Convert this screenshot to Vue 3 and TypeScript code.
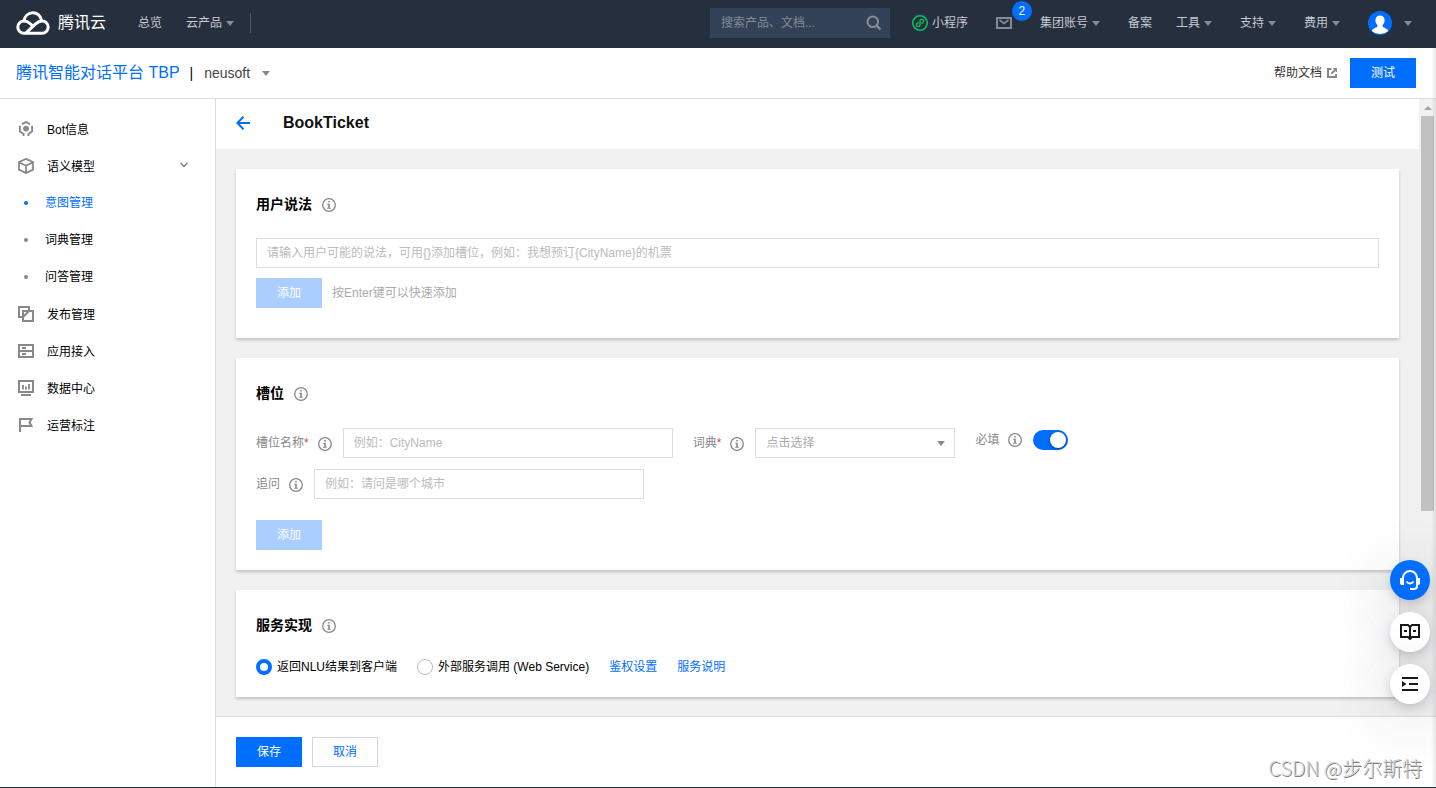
<script setup lang="ts">
import { h, ref, type FunctionalComponent } from 'vue'

interface MenuItem {
  label: string
  icon: string
}

const InfoIcon: FunctionalComponent = () =>
  h('svg', { viewBox: '0 0 14 14', width: 14, height: 14, 'aria-hidden': 'true' }, [
    h('circle', { cx: 7, cy: 7, r: 6.3, fill: 'none', stroke: '#888', 'stroke-width': 1.3 }),
    h('path', { d: 'M6.2 3h1.6v1.5H6.2zM5.2 5.8h2.6v4h1v1H5.2v-1h1V6.8h-1z', fill: '#888' }),
  ])

const topMenu: MenuItem[] = [
  { label: 'Bot信息', icon: 'bot' },
  { label: '语义模型', icon: 'cube' },
]
const subMenu = ['意图管理', '词典管理', '问答管理']
const bottomMenu: MenuItem[] = [
  { label: '发布管理', icon: 'publish' },
  { label: '应用接入', icon: 'server' },
  { label: '数据中心', icon: 'chart' },
  { label: '运营标注', icon: 'flag' },
]
const navItems = [
  { label: '集团账号', caret: true },
  { label: '备案', caret: false },
  { label: '工具', caret: true },
  { label: '支持', caret: true },
  { label: '费用', caret: true },
]

const activeMenu = ref('意图管理')
const keyword = ref('')
const utterance = ref('')
const slotName = ref('')
const dict = ref('')
const question = ref('')
const required = ref(true)
const service = ref('nlu')
</script>

<template>
  <div class="page">
    <header class="topbar">
      <a class="brand" href="#">
        <svg class="brand-logo" viewBox="0 0 34 24" width="34" height="24" aria-hidden="true">
          <g fill="none" stroke="#fff" stroke-width="3" stroke-linejoin="round">
            <path d="M9.5 22.300H26a6.200 6.200 0 0 0 0-12.400c-2.800 0-4.500 1.200-6.400 3L9.800 22.200" />
            <path d="M10 22.300H8A6.200 6.200 0 0 1 8 9.900c2.500 0 4.200 1 6 2.600l2.600 2.400" />
            <path d="M8 9.800C8.700 5 12.300 1.800 16.700 1.800c4.300 0 7.600 2.900 8.800 7.400" />
          </g>
        </svg>
        <span class="brand-name">腾讯云</span>
      </a>
      <a class="nav-link nav-first" href="#">总览</a>
      <a class="nav-link" href="#">云产品<i class="caret" /></a>
      <span class="nav-divider" />
      <div class="search">
        <input v-model="keyword" type="text" placeholder="搜索产品、文档..." aria-label="搜索产品、文档" />
        <svg viewBox="0 0 16 16" width="16" height="16" aria-hidden="true">
          <circle cx="6.800" cy="6.800" r="5.300" fill="none" stroke="#838c99" stroke-width="2" />
          <path d="m10.600 10.600 3.900 3.900" stroke="#838c99" stroke-width="2.400" />
        </svg>
      </div>
      <a class="nav-link mini" href="#">
        <svg viewBox="0 0 16 16" width="16" height="16" aria-hidden="true">
          <g fill="none" stroke="#0abf5b">
            <circle cx="8" cy="8" r="7.200" stroke-width="1.600" />
            <path d="M9.800 8.200c2.600-.6 2.300-3.800 0-3.800C8.700 4.400 8 5.200 8 6.100v3.800c0 .9-.7 1.700-1.800 1.700-2.300 0-2.600-3.200 0-3.800" stroke-width="1.400" stroke-linecap="round" />
          </g>
        </svg>
        小程序
      </a>
      <button class="mail" type="button" aria-label="消息">
        <svg viewBox="0 0 16 12" width="16" height="12" aria-hidden="true">
          <path d="M1 1h14v10H1z" fill="none" stroke="#838c96" stroke-width="2" />
          <path d="m3.500 3 4.500 3.500L12.500 3" fill="none" stroke="#838c96" stroke-width="1.600" />
        </svg>
        <span class="badge">2</span>
      </button>
      <a v-for="item in navItems" :key="item.label" class="nav-link" href="#">{{ item.label }}<i v-if="item.caret" class="caret" /></a>
      <button class="account" type="button" aria-label="账号">
        <svg viewBox="0 0 24 24" width="24" height="24" aria-hidden="true">
          <circle cx="12" cy="12" r="12" fill="#006eff" />
          <path d="M12 4.500c-2.800 0-4.600 2-4.600 4.800 0 1.900.8 3.600 2 4.600v1.600c0 .8-5 1.900-5.700 4.500A12 12 0 0 0 12 23a12 12 0 0 0 8.300-3c-.7-2.600-5.700-3.700-5.700-4.500v-1.600c1.200-1 2-2.700 2-4.600 0-2.800-1.800-4.800-4.600-4.800z" fill="#fff" />
        </svg>
        <i class="caret" />
      </button>
    </header>

    <div class="product-bar">
      <a class="product" href="#">腾讯智能对话平台 TBP</a>
      <span class="bar">|</span>
      <button class="bot-switch" type="button">neusoft<i class="caret dark" /></button>
      <a class="help" href="#">
        帮助文档
        <svg viewBox="0 0 10 10" width="10" height="10" aria-hidden="true">
          <path d="M4.500 1H1v8h8V6" fill="none" stroke="#888" stroke-width="2" />
          <path d="M5.600 0H10v4.400L8.500 2.900 5 6.400 3.700 5.100 7.200 1.600z" fill="#888" />
        </svg>
      </a>
      <button class="btn primary" type="button">测试</button>
    </div>

    <div class="body">
      <nav class="sidebar">
        <a v-for="item in topMenu" :key="item.label" class="menu-item" href="#">
          <svg viewBox="0 0 16 16" width="16" height="16" fill="none" stroke="#888" stroke-width="1.800" aria-hidden="true">
            <template v-if="item.icon === 'bot'">
              <path d="M4 3.200 8 1l4 2.200M1.900 4.800v5.700L5.600 13v2M14.100 4.800v5.700L10.400 13v2" stroke-width="1.900" />
              <circle cx="8" cy="7.600" r="2.900" fill="#888" stroke="none" />
            </template>
            <path v-else d="M8 .9 15 4v7.600l-7 3.500-7-3.500V4zM1 4.200l7 3.600 7-3.600M8 7.800V15" />
          </svg>
          <span>{{ item.label }}</span>
          <svg v-if="item.icon === 'cube'" class="fold" viewBox="0 0 8 6" width="8" height="6" aria-hidden="true">
            <path d="m.6.9 3.400 3.600L7.400.9" fill="none" stroke="#777" stroke-width="1.300" />
          </svg>
        </a>
        <a
          v-for="label in subMenu"
          :key="label"
          class="menu-item sub"
          :class="{ active: label === activeMenu }"
          href="#"
          @click.prevent="activeMenu = label"
        ><i class="dot" /><span>{{ label }}</span></a>
        <a v-for="item in bottomMenu" :key="item.label" class="menu-item" href="#">
          <svg viewBox="0 0 16 16" width="16" height="16" fill="none" stroke="#888" stroke-width="2" aria-hidden="true">
            <path v-if="item.icon === 'publish'" d="M5 11H1V1h10v4M5 5h10v10H5zM5.500 10.500l5-5" />
            <template v-else-if="item.icon === 'server'">
              <path d="M1 2h14v12H1zM1 8h14" />
              <path d="M4 5h4M4 11h4" />
            </template>
            <template v-else-if="item.icon === 'chart'">
              <path d="M1 1h14v11H1zM3 15h10" />
              <path d="M5 5v4.500M8 6.500v3M11 4v5.500" stroke-width="1.800" />
            </template>
            <path v-else d="M2 15V2h11.500L11.500 5.500 13.500 9H2" />
          </svg>
          <span>{{ item.label }}</span>
        </a>
      </nav>

      <div class="workspace">
        <div class="viewport">
          <main class="main">
            <div class="page-head">
              <button class="back" type="button" aria-label="返回">
                <svg viewBox="0 0 14 14" width="14" height="14" aria-hidden="true">
                  <path d="M7.500.8 1.300 7l6.200 6.200M1.500 7H14" fill="none" stroke="#006eff" stroke-width="2" />
                </svg>
              </button>
              <h1>BookTicket</h1>
            </div>

            <div class="cards">
              <section class="card utterances">
                <h2>用户说法<InfoIcon class="info" /></h2>
                <input
                  v-model="utterance"
                  class="field"
                  type="text"
                  aria-label="用户说法"
                  placeholder="请输入用户可能的说法，可用{}添加槽位，例如：我想预订{CityName}的机票"
                />
                <div class="add-row">
                  <button class="btn primary" type="button" disabled>添加</button>
                  <span class="hint">按Enter键可以快速添加</span>
                </div>
              </section>

              <section class="card slots">
                <h2>槽位<InfoIcon class="info" /></h2>
                <div class="form-row">
                  <div class="form-item">
                    <label for="slot-name">槽位名称<em>*</em></label>
                    <InfoIcon class="info" />
                    <input id="slot-name" v-model="slotName" class="field" type="text" placeholder="例如：CityName" />
                  </div>
                  <div class="form-item">
                    <label for="slot-dict">词典<em>*</em></label>
                    <InfoIcon class="info" />
                    <div class="select-wrap">
                      <select id="slot-dict" v-model="dict" class="field">
                        <option value="">点击选择</option>
                      </select>
                      <i class="caret dark" />
                    </div>
                  </div>
                  <div class="form-item toggle">
                    <label for="slot-required">必填</label>
                    <InfoIcon class="info" />
                    <input id="slot-required" v-model="required" class="switch" type="checkbox" />
                  </div>
                </div>
                <div class="form-row">
                  <div class="form-item">
                    <label for="slot-ask">追问</label>
                    <InfoIcon class="info" />
                    <input id="slot-ask" v-model="question" class="field" type="text" placeholder="例如：请问是哪个城市" />
                  </div>
                </div>
                <button class="btn primary" type="button" disabled>添加</button>
              </section>

              <section class="card service">
                <h2>服务实现<InfoIcon class="info" /></h2>
                <div class="radio-row">
                  <label><input v-model="service" type="radio" name="service" value="nlu" />返回NLU结果到客户端</label>
                  <label><input v-model="service" type="radio" name="service" value="web" />外部服务调用 (Web Service)</label>
                  <a href="#">鉴权设置</a>
                  <a href="#">服务说明</a>
                </div>
              </section>
            </div>
          </main>
          <div class="scrollbar">
            <i class="scroll-up" />
            <div class="thumb" />
          </div>
        </div>
        <footer class="actions">
          <button class="btn primary" type="button">保存</button>
          <button class="btn plain" type="button">取消</button>
        </footer>
      </div>
      <div class="edge" />
    </div>

    <div class="float-tools">
      <button class="fab blue" type="button" aria-label="在线客服">
        <svg viewBox="0 0 20 20" width="20" height="20" aria-hidden="true">
          <g fill="none" stroke="#fff" stroke-width="2">
            <path d="M3 9V8a7 7 0 0 1 14 0v1M17 14v2a3 3 0 0 1-3 3h-4" />
            <path d="M6.500 11.500c1.800 2.600 5.200 2.600 7 0" />
          </g>
          <path d="M0 8h4v7H1.500L0 14zM20 8h-4v7h2.500l1.500-1z" fill="#fff" />
        </svg>
      </button>
      <button class="fab" type="button" aria-label="文档">
        <svg viewBox="0 0 20 16" width="20" height="16" fill="none" stroke="#16181c" stroke-width="2" aria-hidden="true">
          <path d="M10 3 8 1H1v12h7l2 2 2-2h7V1h-7zM10 3v12M4 7h3M13 7h3" />
        </svg>
      </button>
      <button class="fab" type="button" aria-label="展开">
        <svg viewBox="0 0 16 14" width="16" height="14" aria-hidden="true">
          <path d="M0 0h16v2H0zM7 6h9v2H7zM0 12h16v2H0zM0 4l4.500 3L0 10z" fill="#16181c" />
        </svg>
      </button>
    </div>
    <div class="watermark">CSDN @步尔斯特</div>
  </div>
</template>

<style>
body {
  margin: 0;
}
</style>

<style scoped>
.page {
  position: relative;
  display: flex;
  flex-direction: column;
  box-sizing: border-box;
  height: 100vh;
  overflow: hidden;
  border-bottom: 1px solid #262f3e;
  background: #fff;
  color: #000;
  font: 12px/20px "Liberation Sans", "Noto Sans CJK SC", sans-serif;
}
a {
  color: inherit;
  text-decoration: none;
}
button,
input,
select {
  box-sizing: border-box;
  margin: 0;
  padding: 0;
  border: 0;
  border-radius: 0;
  background: none;
  color: inherit;
  font: inherit;
}
button {
  cursor: pointer;
}
svg {
  flex: none;
  display: block;
}
.caret {
  flex: none;
  width: 0;
  height: 0;
  margin-left: 4px;
  border: 4px solid transparent;
  border-top: 5px solid #878d96;
  border-bottom: 0;
}
.caret.dark {
  border-top-color: #888;
}

.topbar {
  display: flex;
  align-items: center;
  flex: none;
  box-sizing: border-box;
  height: 48px;
  padding: 0 24px 2px 16px;
  background: #262f3e;
  color: #c7cbd1;
}
.brand {
  display: flex;
  align-items: center;
  gap: 8px;
  color: #fff;
}
.brand-name {
  font-size: 16px;
}
.nav-first {
  margin-left: 32px;
}
.nav-link {
  display: flex;
  align-items: center;
  margin-right: 24px;
  white-space: nowrap;
}
.nav-link:has(.caret) {
  margin-right: 28px;
}
.nav-divider {
  width: 1px;
  height: 20px;
  margin-left: -12px;
  background: #4c5565;
}
.search {
  display: flex;
  align-items: center;
  box-sizing: border-box;
  width: 180px;
  height: 30px;
  margin: 0 22px 0 auto;
  padding: 0 8px 0 11px;
  background: #344258;
}
.search input {
  flex: 1;
  min-width: 0;
  outline: 0;
}
.search input::placeholder {
  color: #838c99;
  opacity: 1;
}
.mini {
  gap: 4px;
  margin-right: 28px;
}
.mail {
  position: relative;
  margin-right: 28px;
}
.badge {
  position: absolute;
  left: 16px;
  top: -16px;
  width: 20px;
  height: 20px;
  border-radius: 50%;
  background: #006eff;
  color: #fff;
  line-height: 20px;
  text-align: center;
}
.account {
  display: flex;
  align-items: center;
  gap: 8px;
}

.product-bar {
  display: flex;
  align-items: center;
  flex: none;
  box-sizing: border-box;
  height: 51px;
  padding: 0 20px 0 16px;
  border-bottom: 1px solid #ddd;
  color: #333;
}
.product {
  color: #006eff;
  font-size: 16px;
}
.bar {
  margin: 0 11px 0 10px;
  color: #000;
  font-size: 14px;
}
.bot-switch {
  display: flex;
  align-items: center;
  gap: 8px;
  color: #444;
  font-size: 14px;
}
.help {
  display: flex;
  align-items: center;
  gap: 5px;
  margin: 0 13px 0 auto;
}

.btn {
  min-width: 66px;
  height: 30px;
  padding: 0 20px;
}
.primary {
  background: #006eff;
  color: #fff;
}
.primary:disabled {
  background: #aaceff;
}
.plain {
  border: 1px solid #cfd5de;
  color: #006eff;
}

.body {
  position: relative;
  display: flex;
  flex: 1;
  min-height: 0;
}
.sidebar {
  flex: none;
  box-sizing: border-box;
  width: 216px;
  padding-top: 12px;
  border-right: 1px solid #ddd;
}
.menu-item {
  display: flex;
  align-items: center;
  box-sizing: border-box;
  height: 37px;
  padding: 0 27px 0 18px;
  gap: 13px;
}
.menu-item > svg:first-child {
  margin-bottom: 1px;
}
.menu-item .fold {
  margin: 0 0 4px auto;
}
.sub {
  gap: 17px;
  padding: 0 27px 2px 24px;
}
.dot {
  width: 4px;
  height: 4px;
  border-radius: 50%;
  background: #888;
}
.active {
  color: #006eff;
}
.active .dot {
  background: #006eff;
}

.workspace {
  display: flex;
  flex-direction: column;
  flex: 1;
  min-width: 0;
}
.viewport {
  display: flex;
  flex: 1;
  min-height: 0;
  overflow: hidden;
}
.main {
  flex: 1;
  min-width: 0;
  background: #f1f1f1;
}
.page-head {
  display: flex;
  align-items: center;
  gap: 33px;
  box-sizing: border-box;
  height: 50px;
  padding: 0 20px 2px;
  background: #fff;
}
h1 {
  margin: 0;
  color: #111;
  font-size: 16px;
}
.cards {
  display: flex;
  flex-direction: column;
  gap: 20px;
  padding: 20px;
}
.card {
  padding: 20px;
  background: #fff;
  box-shadow: 0 2px 3px rgba(0, 0, 0, 0.2);
}
h2 {
  display: flex;
  align-items: center;
  gap: 10px;
  height: 30px;
  margin: 0 0 20px;
  font-size: 14px;
}
h2 .info {
  margin-top: 2px;
}
.field {
  height: 30px;
  padding: 0 10px;
  border: 1px solid #ddd;
  background: #fff;
  outline: 0;
}
.field::placeholder {
  color: #bbb;
  opacity: 1;
}
.utterances {
  padding-bottom: 30px;
}
.utterances h2 {
  margin-bottom: 19px;
}
.utterances .field {
  display: block;
  width: 100%;
}
.add-row {
  display: flex;
  align-items: center;
  gap: 10px;
  margin-top: 10px;
}
.hint {
  color: #aaa;
}
.form-row {
  display: flex;
  gap: 20px;
  margin-bottom: 11px;
}
.form-item {
  display: flex;
  align-items: center;
  color: #888;
}
.form-item .info {
  margin: 2px 11px 0 9px;
}
.form-item .field {
  width: 330px;
}
em {
  color: #e54545;
  font-style: normal;
}
.select-wrap {
  display: flex;
  align-items: center;
}
.select-wrap .field {
  width: 200px;
  appearance: none;
  color: #aaa;
}
.select-wrap .caret {
  margin: 0 10px 0 -18px;
  pointer-events: none;
}
.toggle {
  height: 24px;
}
.toggle .info {
  margin-top: 0;
}
.switch {
  position: relative;
  width: 35px;
  height: 20px;
  border-radius: 10px;
  background: #bbb;
  appearance: none;
}
.switch::before {
  content: "";
  position: absolute;
  left: 2px;
  top: 2px;
  width: 16px;
  height: 16px;
  border-radius: 50%;
  background: #fff;
  box-shadow: 0 1px 3px rgba(0, 0, 0, 0.5);
}
.switch:checked {
  background: #006eff;
}
.switch:checked::before {
  left: 17px;
}
.slots > .btn {
  display: block;
  margin-top: 21px;
}
.service h2 {
  margin-bottom: 17px;
}
.radio-row {
  display: flex;
  align-items: center;
  gap: 20px;
}
.radio-row label {
  display: flex;
  align-items: center;
  gap: 5px;
}
.radio-row input {
  width: 16px;
  height: 16px;
  border: 1px solid #bbb;
  border-radius: 50%;
  appearance: none;
}
.radio-row input:checked {
  border: 4px solid #006eff;
}
.radio-row a {
  color: #006eff;
}

.scrollbar {
  display: flex;
  flex-direction: column;
  align-items: center;
  flex: none;
  width: 17px;
  background: #f1f1f1;
}
.scroll-up {
  margin: 7px 0 6px;
  border: 4px solid transparent;
  border-top: 0;
  border-bottom-color: #a3a3a3;
}
.thumb {
  width: 13px;
  height: 64%;
  background: #c1c1c1;
}
.actions {
  display: flex;
  gap: 10px;
  flex: none;
  padding: 20px;
  border-top: 1px solid #ddd;
  background: #fff;
}
.edge {
  position: absolute;
  top: -51px;
  right: 0;
  bottom: 0;
  width: 5px;
  background: linear-gradient(to right, rgba(0, 0, 0, 0), rgba(0, 0, 0, 0.08));
  pointer-events: none;
}

.float-tools {
  position: absolute;
  right: 6px;
  bottom: 83px;
  display: flex;
  flex-direction: column;
  gap: 12px;
}
.fab {
  display: flex;
  align-items: center;
  justify-content: center;
  width: 40px;
  height: 40px;
  border-radius: 50%;
  background: #fff;
  box-shadow: 0 4px 10px rgba(54, 58, 80, 0.2), 0 12px 60px rgba(54, 58, 80, 0.24);
}
.fab.blue {
  background: #006eff;
}
.watermark {
  position: absolute;
  right: 14px;
  bottom: 4px;
  color: #d4d4d4;
  font: 20px/30px "Noto Sans CJK SC", sans-serif;
  font-weight: 300;
  text-shadow: 1px 1px 0 #808080;
  pointer-events: none;
}
</style>
